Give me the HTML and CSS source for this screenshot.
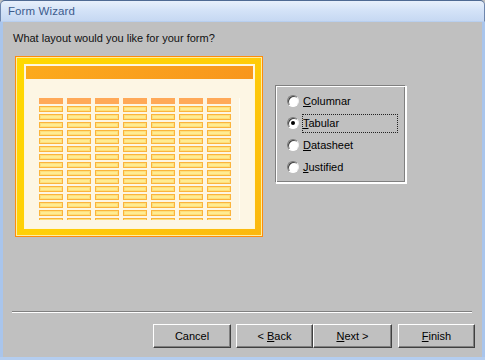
FILE: index.html
```html
<!DOCTYPE html>
<html>
<head>
<meta charset="utf-8">
<link rel="stylesheet" href="styles.css">
</head>
<body>
<div class="window">
  <div class="titlebar"><span class="title">Form Wizard</span></div>
  <div class="content">
    <div class="question">What layout would you like for your form?</div>
    <div class="main">
      <div class="frame">
        <div class="paper">
          <div class="header-bar"></div>
          <div class="grid" id="grid"></div>
        </div>
      </div>
      <div class="group">
        <label class="opt"><span class="radio"></span><span class="lbl"><u>C</u>olumnar</span></label>
        <label class="opt"><span class="radio checked"></span><span class="lbl focus"><u>T</u>abular</span></label>
        <label class="opt"><span class="radio"></span><span class="lbl"><u>D</u>atasheet</span></label>
        <label class="opt"><span class="radio"></span><span class="lbl"><u>J</u>ustified</span></label>
      </div>
    </div>
    <div class="footer">
      <div class="sep"></div>
      <div class="buttons">
        <button class="btn w-cancel">Cancel</button>
        <button class="btn w-back spaced">&lt; <u>B</u>ack</button>
        <button class="btn w-next"><u>N</u>ext &gt;</button>
        <button class="btn w-finish spaced"><u>F</u>inish</button>
      </div>
    </div>
  </div>
</div>
<script>
  var g = document.getElementById('grid');
  for (var r = 0; r < 16; r++) {
    for (var c = 0; c < 7; c++) {
      var d = document.createElement('div');
      d.className = r === 0 ? 'cell head' : 'cell';
      g.appendChild(d);
    }
  }
</script>
</body>
</html>
```
FILE: styles.css
```css
html, body {
  margin: 0;
  padding: 0;
  background: #c0c0c0;
}
body {
  font-family: "Liberation Sans", Arial, sans-serif;
  font-size: 11px;
  color: #000;
}
.window {
  width: 485px;
  height: 360px;
  box-sizing: border-box;
  display: flex;
  flex-direction: column;
  background: #c0c0c0;
  border-bottom: 3px solid #b4cdef;
}
.titlebar {
  height: 22px;
  box-sizing: border-box;
  border-top: 1px solid #4f6a93;
  border-left: 1px solid #6e86ad;
  border-right: 1px solid #6e86ad;
  border-radius: 5px 5px 0 0;
  background: linear-gradient(#e8f0fb, #d3e2f7 50%, #c6d8f2);
  border-bottom: 1px solid #b8cfef;
  display: flex;
  align-items: center;
  padding-left: 7px;
}
.title {
  color: #3d5c8d;
  font-size: 11.5px;
  letter-spacing: 0.1px;
}
.content {
  flex: 1;
  display: flex;
  flex-direction: column;
  border-left: 3px solid #a9c5ec;
  border-right: 3px solid #a9c5ec;
  padding: 0 7px 0 9px;
}
.question {
  margin: 9px 0 0 1px;
  line-height: 14px;
  color: #111;
}
.main {
  display: flex;
  align-items: flex-start;
  margin-top: 11px;
  margin-left: 3px;
}
.frame {
  width: 248px;
  height: 181px;
  box-sizing: border-box;
  border: 1px solid #ff8c0a;
  background: linear-gradient(135deg, #ffd900 0%, #ffce08 50%, #fbb70f 100%);
  box-shadow: inset 0 0 0 1px #ffeea0;
  padding: 7px 7px 7px 8px;
}
.paper {
  height: 100%;
  box-sizing: border-box;
  border: 1px solid #fff6d8;
  background: #fdf6e4;
  padding: 1px 1px 0 1px;
  overflow: hidden;
}
.header-bar {
  height: 13px;
  background: linear-gradient(135deg, #fcaa1c, #f8961d);
}
.grid {
  margin: 19px 0 0 13px;
  width: 197px;
  height: 122px;
  overflow: hidden;
  display: grid;
  grid-template-columns: repeat(7, 24px);
  column-gap: 4px;
  row-gap: 2px;
  grid-auto-rows: 6px;
  border-right: 1px solid #fffdf4;
  padding-right: 3px;
}
.cell {
  box-sizing: border-box;
  border: 1px solid #fbb43c;
  background: #ffec93;
  box-shadow: inset 0 0 0 1px #fde07c;
}
.cell.head {
  border: none;
  box-shadow: none;
  background: #ffa958;
}
.group {
  margin-left: 12px;
  margin-top: 29px;
  width: 131px;
  height: 98px;
  box-sizing: border-box;
  border: 1px solid;
  border-color: #808080 #fff #fff #808080;
  box-shadow: 1px 1px 0 #ffffff, inset 1px 1px 0 #ffffff, inset -1px -1px 0 #808080;
  padding: 4px 0 0 11px;
  display: flex;
  flex-direction: column;
}
.opt {
  height: 22px;
  display: flex;
  align-items: center;
}
.radio {
  width: 12px;
  height: 12px;
  box-sizing: border-box;
  border-radius: 50%;
  background: #fff;
  border: 1px solid;
  border-color: #7a7a7a #f0f0f0 #ffffff #7a7a7a;
  box-shadow: inset 1px 1px 0 #404040;
  display: flex;
  align-items: center;
  justify-content: center;
  flex: none;
}
.radio.checked::after {
  content: "";
  width: 4px;
  height: 4px;
  border-radius: 50%;
  background: #000;
}
.lbl {
  margin-left: 3px;
  padding: 2px 1px 2px 0;
  border: 1px dotted transparent;
  line-height: 13px;
}
.lbl.focus {
  border-color: #222;
  width: 93px;
}
.footer {
  margin-top: auto;
  padding-bottom: 9px;
}
.sep {
  margin-left: 0;
  margin-right: 3px;
  border-top: 1px solid #808080;
  border-bottom: 1px solid #ffffff;
}
.buttons {
  display: flex;
  justify-content: flex-end;
  margin-top: 11px;
}
.btn {
  height: 24px;
  box-sizing: border-box;
  font-family: "Liberation Sans", Arial, sans-serif;
  font-size: 11px;
  color: #000;
  background: #c0c0c0;
  border: 1px solid;
  border-color: #ffffff #404040 #404040 #ffffff;
  box-shadow: inset -1px -1px 0 #808080;
  padding: 0;
  margin: 0;
}
.w-cancel { width: 78px; }
.w-back { width: 77px; }
.w-next { width: 79px; }
.w-finish { width: 77px; }
.spaced { margin-left: 5px; }
.w-finish.spaced { margin-left: 6px; }
```
